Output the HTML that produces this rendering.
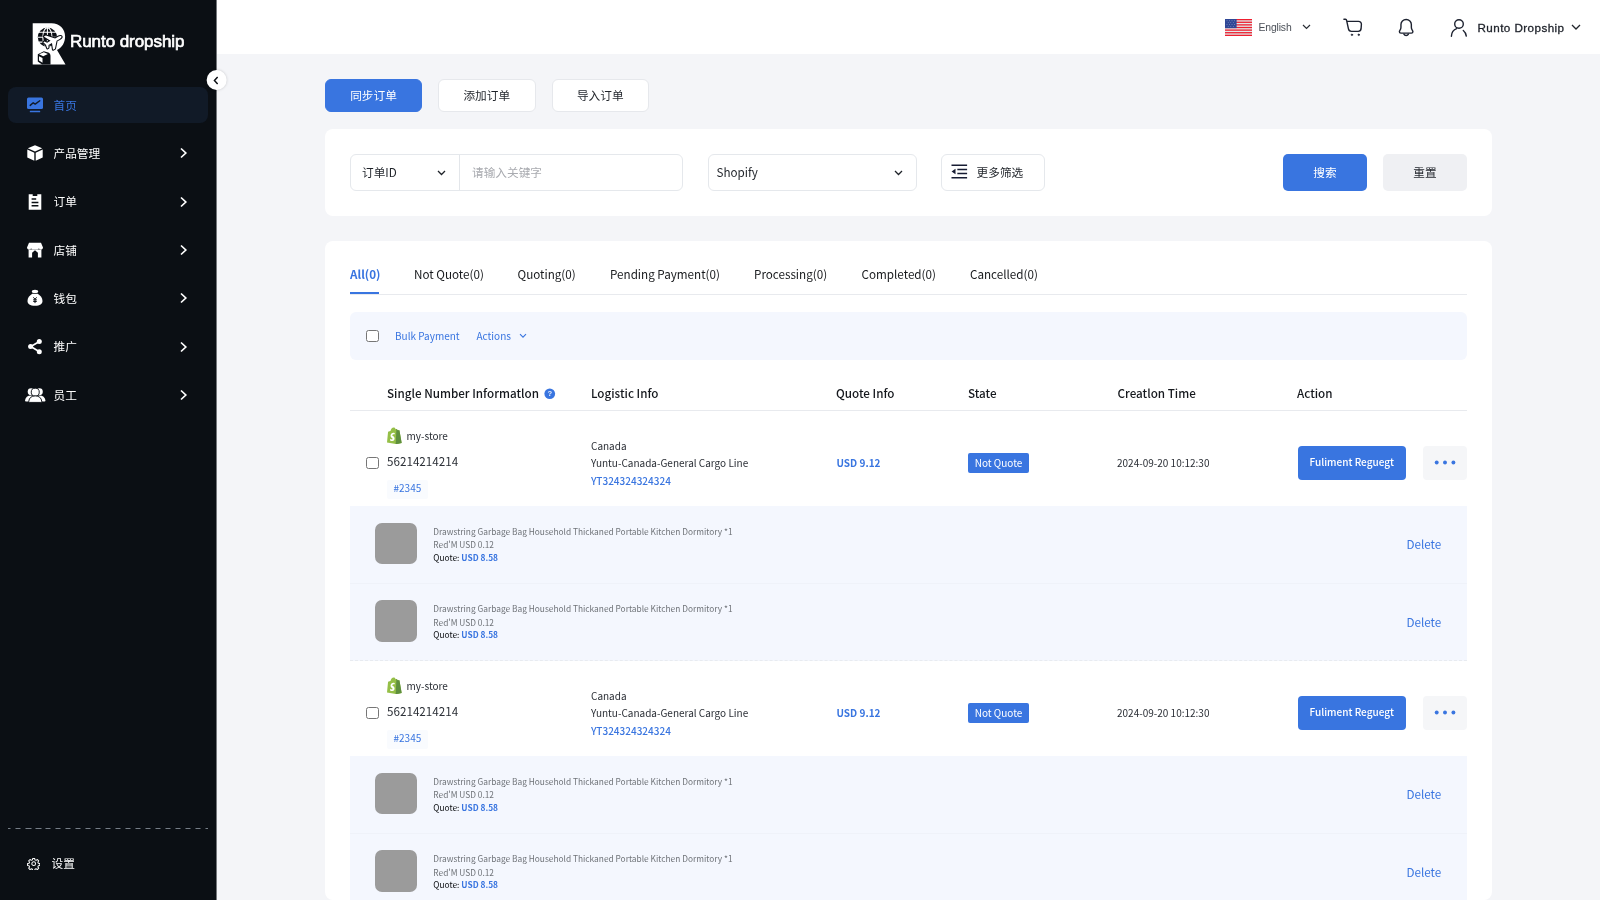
<!DOCTYPE html>
<html lang="zh-CN">
<head>
<meta charset="utf-8">
<title>Runto dropship</title>
<style>
*{box-sizing:border-box;margin:0;padding:0}
html,body{width:1600px;height:900px;overflow:hidden;background:#f4f5f8}
body{will-change:transform;font-family:"Noto Sans CJK SC","Liberation Sans",sans-serif;color:#1f2329;font-size:11.67px;position:relative}
.abs{position:absolute}
/* sidebar */
#side{position:absolute;left:0;top:0;width:216px;height:900px;background:#0b0f14}
#logo-t{position:absolute;left:70px;top:31.2px;font-family:"Liberation Sans",sans-serif;font-weight:400;font-size:17px;color:#fff;letter-spacing:-0.06px;-webkit-text-stroke:.65px #fff;line-height:22px;white-space:nowrap}
.nav{position:absolute;left:8px;width:200px;height:36.5px;border-radius:8px;color:#fff;font-size:11.67px;line-height:36.5px}
.nav.on{background:#111a27;color:#3975e0}
.nav .ic{position:absolute;left:18px;top:9px;width:18px;height:18px}
.nav .tx{position:absolute;left:45.5px;top:0}
.nav .ar{position:absolute;left:170.700px;top:12.400px;width:9px;height:12px}
#dash{position:absolute;left:8px;top:828px;width:200px;height:1px;background:repeating-linear-gradient(90deg,#757d86 0 5.5px,transparent 5.5px 10px) -2.5px 0}
/* header */
#head{position:absolute;left:216.5px;top:0;width:1383.5px;height:54px;background:#fff}
#head .t{font-family:"Liberation Sans",sans-serif;position:absolute;white-space:nowrap}
/* buttons */
.btn{position:absolute;height:33px;border-radius:6px;font-size:11.67px;line-height:29.5px;text-align:center;background:#fff;border:1px solid #e6e8ec;color:#1f2329}
.btn.pri{background:#3975e0;border-color:#3975e0;color:#fff}
.card{position:absolute;left:325px;width:1167px;background:#fff;border-radius:8px}
.inp{position:absolute;top:25px;height:36.5px;border:1px solid #e5e8ec;border-radius:6px;background:#fff;line-height:34.4px;font-size:11.67px}
.tab{position:absolute;top:23.8px;font-size:11.67px;line-height:17px;white-space:nowrap;color:#17191c}
.th{position:absolute;top:143px;font-size:11.67px;font-weight:500;line-height:17px;white-space:nowrap;color:#15181d}
.cb{position:absolute;width:12.5px;height:12.5px;border:1px solid #767676;border-radius:2.5px;background:#fff}
.orow{position:absolute;left:25px;width:1117px;height:95px}
.prow{position:absolute;left:25px;width:1117px;height:77.5px;background:#f4f7fe;border-bottom:1px solid #eff2f9}
.prow.last{border-bottom:1px dashed #e8ebf0}
.prow .img{position:absolute;left:25px;top:16.7px;width:41.5px;height:41.5px;border-radius:7px;background:#9b9b9b}
.prow .l{position:absolute;left:83.3px;font-size:8.36px;line-height:13px;color:#6f7378;white-space:nowrap}
.prow .del{position:absolute;left:1056.5px;top:29px;font-size:11.67px;line-height:17px;color:#3975e0}
.blue{color:#3975e0}
</style>
</head>
<body>
<!-- SIDEBAR -->
<div id="side">
  <svg class="abs" style="left:32.300px;top:22.500px" width="34" height="42" viewBox="0 0 34 42">
    <path d="M.7.200H19.500C27.600.200 33.100 5.800 33.100 13.400 33.100 19.600 30 24.400 25 27L33.500 41.500H.7Z" fill="#fff"/>
    <circle cx="15.400" cy="14.200" r="9.600" fill="#0b0f14"/>
    <g fill="none" stroke="#fff" stroke-width="1.050">
      <ellipse cx="15.400" cy="14.200" rx="4.600" ry="9.600"/>
      <path d="M5.500 14.200H25.300M7 9.300H23.800M7 19.100H23.800M15.400 4.400V24"/>
    </g>
    <g transform="translate(21.500 17.800) rotate(-28)">
      <path d="M9 0C9-.9 7.500-1.300 6-1.300L2.500-1.300-4.200-8.300-6.600-8.300-2.600-1.300-6.500-1.300-8.300-3.600-9.600-3.600-8.600 0-9 3.800-7.800 3.800-6.300 1.300-2.400 1.300-4.600 7.600-2.400 7.600 2.800 1.300 6 1.300C7.500 1.300 9 .9 9 0Z" fill="#0b0f14" stroke="#0b0f14" stroke-width="2.200" stroke-linejoin="round"/>
      <path d="M9 0C9-.9 7.500-1.300 6-1.300L2.500-1.300-4.200-8.300-6.600-8.300-2.600-1.300-6.500-1.300-8.300-3.600-9.600-3.600-8.600 0-9 3.800-7.800 3.800-6.300 1.300-2.400 1.300-4.600 7.600-2.400 7.600 2.800 1.300 6 1.300C7.500 1.300 9 .9 9 0Z" fill="#fff"/>
    </g>
    <path d="M5.800 31.200L11.800 28.200 16.300 29.600C17.600 30.200 18.500 31.500 18.500 33V41.600H10L5.800 38.500Z" fill="#0b0f14"/>
    <path d="M7.100 31.300L11.800 29.200 15.900 31.100 11.200 33.300ZM7 33.200L10.500 35V39.800L7 37.600Z" fill="#fff"/>
  </svg>
  <div id="logo-t">Runto dropship</div>

  <div class="nav on" style="top:86.500px">
    <svg class="ic" viewBox="0 0 18 18"><rect x="1" y="1.500" width="16" height="11.500" rx="1.500" fill="#3975e0"/><path d="M4.200 9.400l3-2.600 2 1.300 4.600-3.300" fill="none" stroke="#111a27" stroke-width="1.400" stroke-linecap="round" stroke-linejoin="round"/><rect x="3.800" y="14.800" width="10.400" height="1.500" rx=".5" fill="#3975e0"/></svg>
    <span class="tx">首页</span>
  </div>
  <div class="nav" style="top:135px">
    <svg class="ic" viewBox="0 0 18 18"><path d="M9 1.200l7.200 3.100L9 7.600 1.800 4.300z" fill="#fff"/><path d="M1.300 5.600l7 3.200v8L1.300 13.600zM16.700 5.600l-7 3.200v8l7-3.200z" fill="#fff"/></svg>
    <span class="tx">产品管理</span>
    <svg class="ar" viewBox="0 0 9 12"><path d="M2 1.500l4.800 4.500L2 10.500" fill="none" stroke="#fff" stroke-width="1.700"/></svg>
  </div>
  <div class="nav" style="top:183.300px">
    <svg class="ic" viewBox="0 0 18 18"><g transform="translate(0 .7)"><path d="M2.700 1.600h4v1.700h4.600V1.600h4v15.400H2.700z" fill="#fff"/><path d="M5.600 6.300h4.600M5.600 9.700h6.800M5.600 13.100h6.800" stroke="#0b0f14" stroke-width="1.500"/></g></svg>
    <span class="tx">订单</span>
    <svg class="ar" viewBox="0 0 9 12"><path d="M2 1.500l4.800 4.500L2 10.500" fill="none" stroke="#fff" stroke-width="1.700"/></svg>
  </div>
  <div class="nav" style="top:231.700px">
    <svg class="ic" viewBox="0 0 18 18"><path d="M3 1.800h12l2 4.600c0 1.200-.9 2.200-2.100 2.200-.9 0-1.700-.5-2-1.300-.3.800-1.100 1.300-2 1.300H7.100c-.9 0-1.700-.5-2-1.300-.3.800-1.100 1.300-2 1.300C1.900 8.600 1 7.600 1 6.400z" fill="#fff"/><path d="M2.600 8.400h12.800v8.100h-3.500v-4.700L9 9.200l-2.900 2.600v4.700H2.600z" fill="#fff"/></svg>
    <span class="tx">店铺</span>
    <svg class="ar" viewBox="0 0 9 12"><path d="M2 1.500l4.800 4.500L2 10.500" fill="none" stroke="#fff" stroke-width="1.700"/></svg>
  </div>
  <div class="nav" style="top:280px">
    <svg class="ic" viewBox="0 0 18 18"><ellipse cx="9" cy="2.400" rx="3.200" ry="1.700" fill="#fff"/><path d="M6.300 4.800h5.400c2.800 1.600 4.800 4.300 4.800 7.200 0 3-2.500 4.800-7.500 4.800s-7.500-1.800-7.500-4.800c0-2.900 2-5.600 4.800-7.200z" fill="#fff"/><path d="M7.400 8.300L9 10.300l1.600-2M7.200 10.800h3.600M7.200 12.400h3.600M9 10.300v3.800" stroke="#0b0f14" stroke-width="1" fill="none"/></svg>
    <span class="tx">钱包</span>
    <svg class="ar" viewBox="0 0 9 12"><path d="M2 1.500l4.800 4.500L2 10.500" fill="none" stroke="#fff" stroke-width="1.700"/></svg>
  </div>
  <div class="nav" style="top:328.300px">
    <svg class="ic" viewBox="0 0 18 18"><path d="M13 4.700L4.800 9.600l8.200 4.900" fill="none" stroke="#fff" stroke-width="1.700"/><circle cx="13.300" cy="4.600" r="2.500" fill="#fff"/><circle cx="4.600" cy="9.600" r="2.500" fill="#fff"/><circle cx="13.300" cy="14.700" r="2.500" fill="#fff"/></svg>
    <span class="tx">推广</span>
    <svg class="ar" viewBox="0 0 9 12"><path d="M2 1.500l4.800 4.500L2 10.500" fill="none" stroke="#fff" stroke-width="1.700"/></svg>
  </div>
  <div class="nav" style="top:376.700px">
    <svg class="ic" style="left:17px;top:9.500px;width:20.500px;height:17px" viewBox="0 0 22 18"><circle cx="6.500" cy="6" r="3.600" fill="#fff"/><circle cx="15.500" cy="6" r="3.600" fill="#fff"/><path d="M0 15.500c.4-3.500 2.800-5.500 6.500-5.500 1.200 0 2.300.3 3.200.8-2 1.200-3 3-3.200 5.700H1c-.6 0-1-.4-1-1zM22 15.500c-.4-3.500-2.800-5.500-6.500-5.500-1.200 0-2.300.3-3.200.8 2 1.200 3 3 3.200 5.700H21c.6 0 1-.4 1-1z" fill="#fff"/><circle cx="11" cy="6.500" r="4.300" fill="#fff" stroke="#0b0f14" stroke-width="1"/><path d="M4 16.500c.4-4 3-6 7-6s6.600 2 7 6c0 .6-.4 1-1 1H5c-.6 0-1-.4-1-1z" fill="#fff" stroke="#0b0f14" stroke-width="1"/></svg>
    <span class="tx">员工</span>
    <svg class="ar" viewBox="0 0 9 12"><path d="M2 1.500l4.800 4.500L2 10.500" fill="none" stroke="#fff" stroke-width="1.700"/></svg>
  </div>
  <div id="dash"></div>
  <svg class="abs" style="left:26.800px;top:857.100px" width="13.400" height="13.400" viewBox="0 0 24 24" fill="none" stroke="#fff" stroke-width="1.800" stroke-linejoin="round"><circle cx="12" cy="12" r="3.300"/><path d="M10.300 2.500h3.400l.6 2.700 1.900.8 2.400-1.500 2.400 2.400-1.500 2.400.8 1.900 2.700.6v3.400l-2.700.6-.8 1.900 1.500 2.400-2.400 2.400-2.400-1.500-1.900.8-.6 2.700h-3.400l-.6-2.700-1.900-.8-2.400 1.500-2.400-2.400 1.500-2.400-.8-1.900-2.700-.6v-3.400l2.700-.6.800-1.900-1.500-2.400 2.400-2.400 2.400 1.500 1.900-.8z"/></svg>
  <div class="abs" style="left:51.500px;top:854px;color:#fff;font-size:11.67px;line-height:17px">设置</div>
</div>
<div class="abs" style="left:216px;top:0;width:1px;height:900px;background:rgba(11,15,20,.55);z-index:4"></div>
<!-- collapse button -->
<div class="abs" style="left:207px;top:70px;transform:translateX(-.35px);width:20px;height:20px;border-radius:50%;background:#fff;box-shadow:0 0 3px rgba(0,0,0,.18);z-index:5">
  <svg class="abs" style="left:6px;top:5.500px" width="7" height="9" viewBox="0 0 7 9"><path d="M5 1L1.800 4.500 5 8" fill="none" stroke="#0b0f14" stroke-width="1.500"/></svg>
</div>

<!-- HEADER -->
<div id="head">
  <svg class="abs" style="left:1008.500px;top:19px" width="27" height="17" viewBox="0 0 27 17">
    <rect width="27" height="17" fill="#e2eaea"/>
    <g fill="#ee1f30"><rect y="0" width="27" height="1.310"/><rect y="2.620" width="27" height="1.310"/><rect y="5.230" width="27" height="1.310"/><rect y="7.850" width="27" height="1.310"/><rect y="10.460" width="27" height="1.310"/><rect y="13.080" width="27" height="1.310"/><rect y="15.690" width="27" height="1.310"/></g>
    <rect width="11.600" height="9.150" fill="#2f4796"/>
    <g fill="#a9b3d6"><circle cx="2" cy="1.700" r=".45"/><circle cx="4.500" cy="1.700" r=".45"/><circle cx="7" cy="1.700" r=".45"/><circle cx="9.500" cy="1.700" r=".45"/><circle cx="3.200" cy="3.600" r=".45"/><circle cx="5.800" cy="3.600" r=".45"/><circle cx="8.300" cy="3.600" r=".45"/><circle cx="2" cy="5.500" r=".45"/><circle cx="4.500" cy="5.500" r=".45"/><circle cx="7" cy="5.500" r=".45"/><circle cx="9.500" cy="5.500" r=".45"/><circle cx="3.200" cy="7.400" r=".45"/><circle cx="5.800" cy="7.400" r=".45"/><circle cx="8.300" cy="7.400" r=".45"/></g>
  </svg>
  <div class="t" style="left:1042px;top:19.700px;font-size:10.4px;letter-spacing:-.15px;line-height:16px;color:#4b5058">English</div>
  <svg class="abs" style="left:1085px;top:24px" width="9" height="6" viewBox="0 0 9 6"><path d="M1 1l3.500 3.500L8 1" fill="none" stroke="#2a2e35" stroke-width="1.200"/></svg>
  <svg class="abs" style="left:1126px;top:18px" width="21" height="19" viewBox="0 0 21 19" fill="none" stroke="#1d2230" stroke-width="1.400" stroke-linecap="round" stroke-linejoin="round">
    <path d="M.9 1.300H2.500c.6 0 1 .4 1.100 1L5.400 10.700c.3 1.700 1.300 2.700 3 2.700h6.800c1.700 0 2.700-1 2.900-2.700l.3-4.300c.1-1.800-1.100-3-2.900-3H4.200"/>
    <circle cx="8.900" cy="16.800" r=".8" fill="#1d2230" stroke-width=".6"/><circle cx="15.700" cy="16.800" r=".8" fill="#1d2230" stroke-width=".6"/>
  </svg>
  <svg class="abs" style="left:1181px;top:18px" width="17" height="19" viewBox="0 0 17 19" fill="none" stroke="#1d2230" stroke-width="1.400" stroke-linecap="round" stroke-linejoin="round">
    <path d="M8.150 1.450c-3 0-5.200 2.200-5.200 5v2.900c0 1.100-.3 2-.9 2.800-.5.700-.65 1.200-.65 1.700 0 .8.600 1.250 1.500 1.250h10.500c.9 0 1.500-.45 1.500-1.250 0-.5-.15-1-.65-1.700-.6-.8-.9-1.700-.9-2.800V6.450c0-2.800-2.200-5-5.200-5z"/>
    <path d="M5.900 16.100c.4.900 1.200 1.400 2.250 1.400s1.850-.5 2.250-1.400"/>
  </svg>
  <svg class="abs" style="left:1233.500px;top:18px" width="18" height="20" viewBox="0 0 18 20" fill="none" stroke="#1d2230" stroke-width="1.400" stroke-linecap="round">
    <circle cx="9" cy="6" r="4.300"/>
    <path d="M1.400 18.200c.2-4 2.100-6.500 5.300-7.600M13.300 12.500c1.600 1.300 2.700 3.200 3 5.600"/>
  </svg>
  <div class="t" style="left:1261px;top:18.800px;font-size:11.67px;letter-spacing:.43px;line-height:17px;color:#1d2129;-webkit-text-stroke:.3px #1d2129">Runto Dropship</div>
  <svg class="abs" style="left:1354.500px;top:24.200px" width="10" height="6.500" viewBox="0 0 10 6.500"><path d="M1 1l4 4 4-4" fill="none" stroke="#22262c" stroke-width="1.300"/></svg>
</div>

<!-- MAIN -->
<div class="btn pri" style="left:325px;top:79px;width:97px">同步订单</div>
<div class="btn" style="left:438px;top:79px;width:97.500px">添加订单</div>
<div class="btn" style="left:551.500px;top:79px;width:97.500px">导入订单</div>

<div class="card" id="filter" style="top:129px;height:86.500px">
  <div class="inp" style="left:25px;width:333px">
    <span class="abs" style="left:11px;top:0;color:#1f2329">订单ID</span>
    <svg class="abs" style="left:86px;top:14.500px" width="9" height="6" viewBox="0 0 9 6"><path d="M1 1l3.500 3.500L8 1" fill="none" stroke="#1f2329" stroke-width="1.300"/></svg>
    <span class="abs" style="left:107.500px;top:0;width:1px;height:34.500px;background:#e3e6ea"></span>
    <span class="abs" style="left:121px;top:0;color:#a9abb0">请输入关键字</span>
  </div>
  <div class="inp" style="left:383px;width:209px">
    <span class="abs" style="left:7.500px;top:0;color:#1f2329">Shopify</span>
    <svg class="abs" style="left:185px;top:14.500px" width="9" height="6" viewBox="0 0 9 6"><path d="M1 1l3.500 3.500L8 1" fill="none" stroke="#1f2329" stroke-width="1.300"/></svg>
  </div>
  <div class="inp" style="left:616px;width:104px">
    <svg class="abs" style="left:9px;top:9.300px" width="16.600" height="15" viewBox="0 0 17 15" preserveAspectRatio="none"><path d="M.5 1.300h16M6.500 5.400h10M6.500 9.600h10M.5 13.700h16" stroke="#171c33" stroke-width="1.500" fill="none"/><path d="M.6 7.500l4-2.700v5.400z" fill="#171c33"/></svg>
    <span class="abs" style="left:34.600px;top:0;color:#1f2329">更多筛选</span>
  </div>
  <div class="abs" style="left:958px;top:25px;width:84px;height:36.500px;border-radius:5px;background:#3975e0;color:#fff;text-align:center;line-height:35.5px;font-size:11.67px">搜索</div>
  <div class="abs" style="left:1058px;top:25px;width:84px;height:36.500px;border-radius:5px;background:#eff0f3;color:#1f2329;text-align:center;line-height:35.5px;font-size:11.67px">重置</div>
</div>

<div class="card" id="table" style="top:241px;height:659px;overflow:hidden">
  <span class="tab" style="left:25px;color:#3975e0;font-weight:700">All(0)</span>
  <span class="tab" style="left:89px">Not Quote(0)</span>
  <span class="tab" style="left:192.5px">Quoting(0)</span>
  <span class="tab" style="left:285px">Pending Payment(0)</span>
  <span class="tab" style="left:429px">Processing(0)</span>
  <span class="tab" style="left:536.5px">Completed(0)</span>
  <span class="tab" style="left:645px">Cancelled(0)</span>
  <span class="abs" style="left:25px;top:53px;width:1117px;height:1px;background:#e8eaee"></span>
  <span class="abs" style="left:25px;top:50.500px;width:28.800px;height:2.800px;background:#3975e0"></span>
  <div class="abs" style="left:25px;top:71px;width:1117px;height:47.500px;border-radius:6px;background:#f4f7fe">
    <span class="cb" style="left:16px;top:17.500px"></span>
    <span class="abs blue" style="left:45px;top:15.600px;font-size:10px;line-height:15px;white-space:nowrap">Bulk Payment</span>
    <span class="abs blue" style="left:126.500px;top:15.600px;font-size:10px;line-height:15px;white-space:nowrap">Actions</span>
    <svg class="abs" style="left:168.500px;top:21px" width="8" height="6" viewBox="0 0 8 6"><path d="M1 1.200l3 3 3-3" fill="none" stroke="#3975e0" stroke-width="1.100"/></svg>
  </div>
  <span class="th" style="left:62px">Single Number Informatlon</span>
  <span class="th" style="left:266px">Logistic Info</span>
  <span class="th" style="left:511px">Quote Info</span>
  <span class="th" style="left:643px">State</span>
  <span class="th" style="left:792.5px">Creatlon Time</span>
  <span class="th" style="left:972px">Action</span>
  <svg class="abs" style="left:219px;top:147px" width="11.500" height="11.500" viewBox="0 0 12 12"><circle cx="6" cy="6" r="5.600" fill="#3975e0"/><text x="6" y="8.800" font-family="Liberation Sans,sans-serif" font-size="8" font-weight="700" fill="#e6edfb" text-anchor="middle">?</text></svg>
  <span class="abs" style="left:25px;top:169px;width:1117px;height:1px;background:#e8eaee"></span>
  <div class="orow" style="top:170px">
    <svg class="abs" style="left:37.400px;top:16px" width="15.200" height="17.400" viewBox="0 0 15 17"><path d="M12.300 3.300c0-.1-.1-.2-.2-.2l-1.500-.1-1.100-1.100c-.1-.1-.3-.1-.4 0l-.6.200C8.200 1.200 7.600.5 6.600.5 5 .5 3.800 2.300 3.400 3.800l-1.800.6c-.5.200-.5.200-.6.700L0 15.200l9.800 1.700 4.700-1.100z" fill="#95bf47"/><path d="M12.100 3.100l-1.500-.1-1.100-1.100c0-.1-.1-.1-.2-.1l-.7 15.100 5.900-1.100-2.200-12.500c0-.1-.1-.2-.2-.2z" fill="#5e8e3e"/><path d="M7.800 5.800l-.5 1.600s-.6-.3-1.200-.2c-1 .1-1 .7-1 .9.100.9 2.300 1 2.400 3 .1 1.500-.8 2.600-2.100 2.700-1.600.1-2.400-.8-2.400-.8l.3-1.400s.9.700 1.600.6c.5 0 .6-.4.600-.7-.1-1.100-1.900-1-2-2.800-.1-1.500.9-3.100 3.100-3.200.8-.1 1.200.300 1.200.300z" fill="#fff"/></svg>
    <span class="abs" style="left:56.500px;top:16.9px;font-size:10px;line-height:16px;color:#2b2f36;white-space:nowrap">my-store</span>
    <span class="cb" style="left:16px;top:45.500px"></span>
    <span class="abs" style="left:37px;top:40.6px;font-size:11.67px;line-height:17px;color:#2b2f36;white-space:nowrap">56214214214</span>
    <span class="abs" style="left:37px;top:68.500px;width:41px;height:19px;background:#f9fbfe;border-radius:2px"></span>
    <span class="abs blue" style="left:43.500px;top:69px;font-size:10px;line-height:15px;white-space:nowrap">#2345</span>
    <span class="abs" style="left:241px;top:27.1px;font-size:10px;line-height:15px;color:#2b2f36;white-space:nowrap">Canada</span>
    <span class="abs" style="left:241px;top:44.100px;font-size:10px;line-height:15px;color:#2b2f36;white-space:nowrap">Yuntu-Canada-General Cargo Line</span>
    <span class="abs blue" style="left:241px;top:62px;font-size:10px;line-height:15px;font-weight:500;white-space:nowrap">YT324324324324</span>
    <span class="abs blue" style="left:486.5px;top:43.5px;font-size:10px;line-height:15px;font-weight:700;white-space:nowrap">USD 9.12</span>
    <span class="abs" style="left:618px;top:42px;width:61px;height:20px;background:#3975e0;border-radius:2px;color:#fff;font-size:10px;line-height:19.2px;text-align:center;white-space:nowrap">Not Quote</span>
    <span class="abs" style="left:767px;top:43.5px;font-size:10px;line-height:15px;color:#2b2f36;white-space:nowrap">2024-09-20 10:12:30</span>
    <span class="abs" style="left:947.500px;top:35px;width:108.500px;height:33.500px;background:#3975e0;border-radius:4px;color:#fff;font-size:10px;font-weight:500;line-height:31px;text-align:center;white-space:nowrap">Fuliment Reguegt</span>
    <span class="abs" style="left:1073px;top:35px;width:44px;height:33.500px;background:#f5f6f8;border-radius:4px"></span>
    <svg class="abs" style="left:1082.500px;top:49.100px" width="24" height="5" viewBox="0 0 24 5"><circle cx="3.700" cy="2.500" r="1.950" fill="#3975e0"/><circle cx="12" cy="2.500" r="1.950" fill="#3975e0"/><circle cx="20.400" cy="2.500" r="1.950" fill="#3975e0"/></svg>
  </div>
  <div class="prow" style="top:265px">
    <span class="img"></span>
    <span class="l" style="top:18.9px">Drawstring Garbage Bag Household Thickaned Portable Kitchen Dormitory *1</span>
    <span class="l" style="top:32px">Red'M USD 0.12</span>
    <span class="l" style="top:44.600px;color:#0d0f12">Quote: <span class="blue" style="font-weight:700">USD 8.58</span></span>
    <span class="del">Delete</span>
  </div>
  <div class="prow last" style="top:342.5px">
    <span class="img"></span>
    <span class="l" style="top:18.9px">Drawstring Garbage Bag Household Thickaned Portable Kitchen Dormitory *1</span>
    <span class="l" style="top:32px">Red'M USD 0.12</span>
    <span class="l" style="top:44.600px;color:#0d0f12">Quote: <span class="blue" style="font-weight:700">USD 8.58</span></span>
    <span class="del">Delete</span>
  </div>
  <div class="orow" style="top:420px">
    <svg class="abs" style="left:37.400px;top:16px" width="15.200" height="17.400" viewBox="0 0 15 17"><path d="M12.300 3.300c0-.1-.1-.2-.2-.2l-1.500-.1-1.100-1.100c-.1-.1-.3-.1-.4 0l-.6.200C8.200 1.200 7.600.5 6.600.5 5 .5 3.800 2.300 3.400 3.800l-1.800.6c-.5.200-.5.200-.6.700L0 15.200l9.800 1.700 4.700-1.100z" fill="#95bf47"/><path d="M12.100 3.100l-1.500-.1-1.100-1.100c0-.1-.1-.1-.2-.1l-.7 15.100 5.900-1.100-2.200-12.500c0-.1-.1-.2-.2-.2z" fill="#5e8e3e"/><path d="M7.800 5.800l-.5 1.600s-.6-.3-1.200-.2c-1 .1-1 .7-1 .9.100.9 2.300 1 2.400 3 .1 1.500-.8 2.600-2.100 2.700-1.600.1-2.400-.8-2.400-.8l.3-1.400s.9.700 1.600.6c.5 0 .6-.4.600-.7-.1-1.100-1.900-1-2-2.800-.1-1.500.9-3.100 3.100-3.200.8-.1 1.200.300 1.200.300z" fill="#fff"/></svg>
    <span class="abs" style="left:56.500px;top:16.9px;font-size:10px;line-height:16px;color:#2b2f36;white-space:nowrap">my-store</span>
    <span class="cb" style="left:16px;top:45.500px"></span>
    <span class="abs" style="left:37px;top:40.6px;font-size:11.67px;line-height:17px;color:#2b2f36;white-space:nowrap">56214214214</span>
    <span class="abs" style="left:37px;top:68.500px;width:41px;height:19px;background:#f9fbfe;border-radius:2px"></span>
    <span class="abs blue" style="left:43.500px;top:69px;font-size:10px;line-height:15px;white-space:nowrap">#2345</span>
    <span class="abs" style="left:241px;top:27.1px;font-size:10px;line-height:15px;color:#2b2f36;white-space:nowrap">Canada</span>
    <span class="abs" style="left:241px;top:44.100px;font-size:10px;line-height:15px;color:#2b2f36;white-space:nowrap">Yuntu-Canada-General Cargo Line</span>
    <span class="abs blue" style="left:241px;top:62px;font-size:10px;line-height:15px;font-weight:500;white-space:nowrap">YT324324324324</span>
    <span class="abs blue" style="left:486.5px;top:43.5px;font-size:10px;line-height:15px;font-weight:700;white-space:nowrap">USD 9.12</span>
    <span class="abs" style="left:618px;top:42px;width:61px;height:20px;background:#3975e0;border-radius:2px;color:#fff;font-size:10px;line-height:19.2px;text-align:center;white-space:nowrap">Not Quote</span>
    <span class="abs" style="left:767px;top:43.5px;font-size:10px;line-height:15px;color:#2b2f36;white-space:nowrap">2024-09-20 10:12:30</span>
    <span class="abs" style="left:947.500px;top:35px;width:108.500px;height:33.500px;background:#3975e0;border-radius:4px;color:#fff;font-size:10px;font-weight:500;line-height:31px;text-align:center;white-space:nowrap">Fuliment Reguegt</span>
    <span class="abs" style="left:1073px;top:35px;width:44px;height:33.500px;background:#f5f6f8;border-radius:4px"></span>
    <svg class="abs" style="left:1082.500px;top:49.100px" width="24" height="5" viewBox="0 0 24 5"><circle cx="3.700" cy="2.500" r="1.950" fill="#3975e0"/><circle cx="12" cy="2.500" r="1.950" fill="#3975e0"/><circle cx="20.400" cy="2.500" r="1.950" fill="#3975e0"/></svg>
  </div>
  <div class="prow" style="top:515px">
    <span class="img"></span>
    <span class="l" style="top:18.9px">Drawstring Garbage Bag Household Thickaned Portable Kitchen Dormitory *1</span>
    <span class="l" style="top:32px">Red'M USD 0.12</span>
    <span class="l" style="top:44.600px;color:#0d0f12">Quote: <span class="blue" style="font-weight:700">USD 8.58</span></span>
    <span class="del">Delete</span>
  </div>
  <div class="prow last" style="top:592.5px">
    <span class="img"></span>
    <span class="l" style="top:18.9px">Drawstring Garbage Bag Household Thickaned Portable Kitchen Dormitory *1</span>
    <span class="l" style="top:32px">Red'M USD 0.12</span>
    <span class="l" style="top:44.600px;color:#0d0f12">Quote: <span class="blue" style="font-weight:700">USD 8.58</span></span>
    <span class="del">Delete</span>
  </div>
</div>
</body>
</html>
